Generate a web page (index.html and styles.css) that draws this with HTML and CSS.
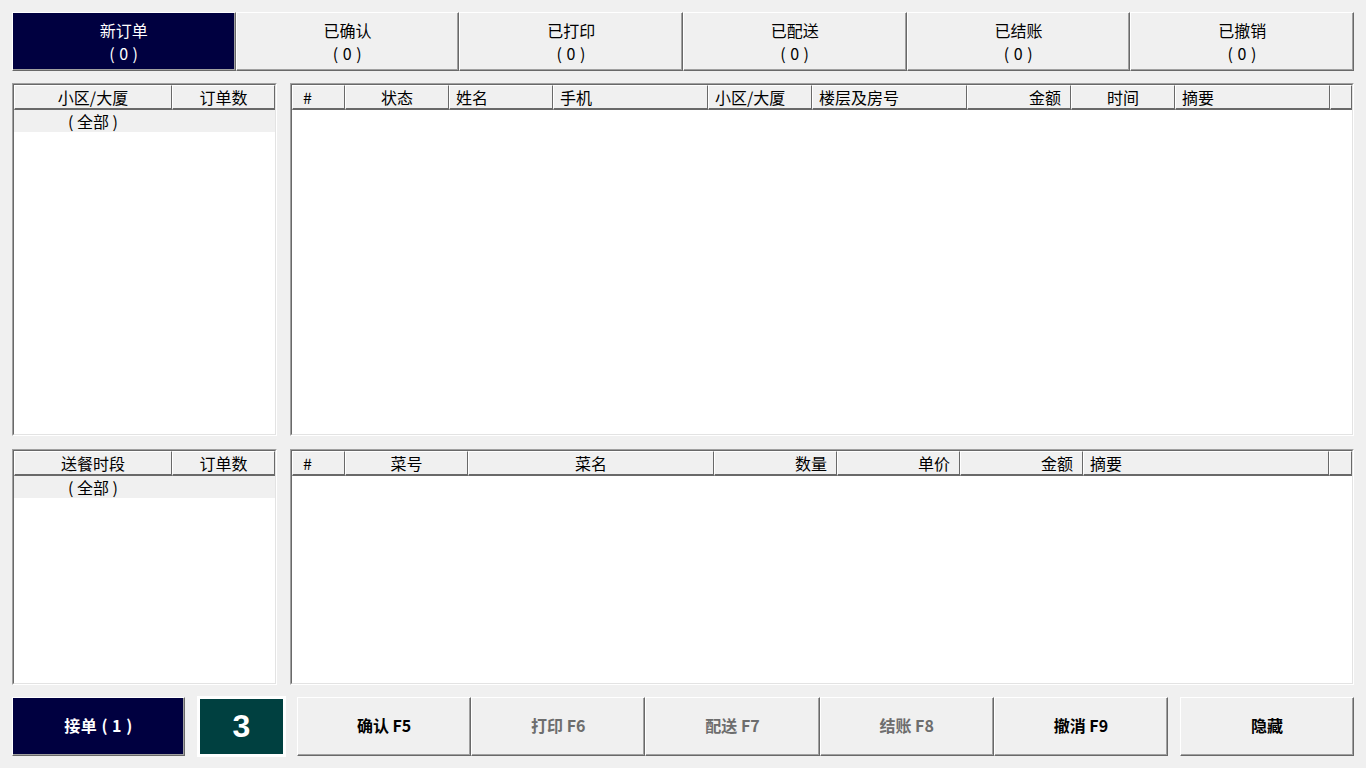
FILE: index.html
```html
<!DOCTYPE html>
<html lang="zh-CN">
<head>
<meta charset="utf-8">
<title>订单</title>
<link rel="stylesheet" href="styles.css">
</head>
<body>
<div class="app">
  <div class="tabs">
    <div class="tab active"><span class="t1">新订单</span><span class="t2">( 0 )</span></div>
    <div class="tab"><span class="t1">已确认</span><span class="t2">( 0 )</span></div>
    <div class="tab"><span class="t1">已打印</span><span class="t2">( 0 )</span></div>
    <div class="tab"><span class="t1">已配送</span><span class="t2">( 0 )</span></div>
    <div class="tab"><span class="t1">已结账</span><span class="t2">( 0 )</span></div>
    <div class="tab"><span class="t1">已撤销</span><span class="t2">( 0 )</span></div>
  </div>

  <div class="row row-top">
    <div class="panel side">
      <div class="inner">
        <div class="thead cols-side">
          <div class="h c">小区/大厦</div>
          <div class="h c">订单数</div>
        </div>
        <div class="trow cols-side">
          <div class="cell c">( 全部 )</div>
          <div class="cell"></div>
        </div>
      </div>
    </div>
    <div class="panel main">
      <div class="inner">
        <div class="thead cols-orders">
          <div class="h l hash">#</div>
          <div class="h c">状态</div>
          <div class="h l">姓名</div>
          <div class="h l">手机</div>
          <div class="h l">小区/大厦</div>
          <div class="h l">楼层及房号</div>
          <div class="h r">金额</div>
          <div class="h c">时间</div>
          <div class="h l">摘要</div>
          <div class="h"></div>
        </div>
      </div>
    </div>
  </div>

  <div class="row row-bottom">
    <div class="panel side">
      <div class="inner">
        <div class="thead cols-side">
          <div class="h c">送餐时段</div>
          <div class="h c">订单数</div>
        </div>
        <div class="trow cols-side">
          <div class="cell c">( 全部 )</div>
          <div class="cell"></div>
        </div>
      </div>
    </div>
    <div class="panel main">
      <div class="inner">
        <div class="thead cols-items">
          <div class="h l hash">#</div>
          <div class="h c">菜号</div>
          <div class="h c">菜名</div>
          <div class="h r">数量</div>
          <div class="h r">单价</div>
          <div class="h r">金额</div>
          <div class="h l">摘要</div>
          <div class="h"></div>
        </div>
      </div>
    </div>
  </div>

  <div class="actions">
    <div class="btn accept">接单 ( 1 )</div>
    <div class="count"><span>3</span></div>
    <div class="btn-group">
      <div class="btn">确认 F5</div>
      <div class="btn disabled">打印 F6</div>
      <div class="btn disabled">配送 F7</div>
      <div class="btn disabled">结账 F8</div>
      <div class="btn">撤消 F9</div>
    </div>
    <div class="btn hide">隐藏</div>
  </div>
</div>
</body>
</html>
```

FILE: styles.css
```css
* { box-sizing: border-box; }
html, body { margin: 0; padding: 0; }
body {
  background: #f0f0f0;
  font-family: "Noto Sans CJK SC", "Noto Sans", sans-serif;
  font-size: 16px;
  color: #000;
  width: 1366px;
  height: 768px;
  overflow: hidden;
}
.app {
  padding: 12px;
  display: flex;
  flex-direction: column;
  height: 768px;
}
.tabs {
  display: flex;
  height: 59px;
  flex: none;
}
.tab {
  flex: 1;
  display: flex;
  flex-direction: column;
  align-items: center;
  justify-content: center;
  border: 1px solid;
  border-color: #fff #696969 #696969 #fff;
  box-shadow: inset -1px -1px 0 #a0a0a0;
  line-height: 23px;
  background: #f0f0f0;
}
.tab .t1 { display: block; }
.tab .t2 { display: block; letter-spacing: 0.5px; }
.tab.active {
  background: #000040;
  color: #fff;
}
.row {
  display: flex;
  gap: 13px;
  flex: none;
}
.row-top { height: 353px; margin-top: 12px; }
.row-bottom { height: 236px; margin-top: 13px; }
.panel {
  border: 1px solid;
  border-color: #a0a0a0 #fff #fff #a0a0a0;
  background: #fff;
}
.panel.side { width: 265px; flex: none; }
.panel.main { flex: 1; }
.inner {
  height: 100%;
  border: 1px solid;
  border-color: #696969 #e3e3e3 #e3e3e3 #696969;
  background: #fff;
  overflow: hidden;
}
.thead { display: grid; height: 25px; }
.cols-side { grid-template-columns: 158px 1fr; }
.cols-orders { grid-template-columns: 53px 104px 104px 155px 104px 155px 104px 104px 155px 1fr; }
.cols-items { grid-template-columns: 53px 123px 246px 123px 123px 123px 246px 1fr; }
.h {
  background: #f0f0f0;
  border-top: 1px solid #fff;
  border-left: 1px solid #fff;
  border-right: 1px solid #696969;
  border-bottom: 2px solid #696969;
  line-height: 22px;
  padding: 0 6px;
  white-space: nowrap;
  overflow: hidden;
}
.h.l { text-align: left; }
.h.c { text-align: center; }
.h.r { text-align: right; padding-right: 9px; }
.h.hash { padding-left: 10px; }
.trow {
  display: grid;
  height: 22px;
  background: #f0f0f0;
}
.cell { line-height: 22px; white-space: nowrap; }
.cell.c { text-align: center; }
.actions {
  display: flex;
  gap: 12px;
  height: 59px;
  margin-top: 12px;
  flex: none;
  align-items: center;
}
.btn {
  height: 59px;
  display: flex;
  align-items: center;
  justify-content: center;
  padding-bottom: 3px;
  font-weight: bold;
  border: 1px solid;
  border-color: #fff #696969 #696969 #fff;
  box-shadow: inset -1px -1px 0 #a0a0a0;
  background: #f0f0f0;
  color: #000;
}
.btn.accept {
  width: 173px;
  flex: none;
  background: #000040;
  color: #fff;
  letter-spacing: 0.5px;
}
.btn.disabled { color: #6d6d6d; }
.btn.hide { width: 174px; flex: none; }
.count {
  width: 89px;
  height: 61px;
  flex: none;
  border: 3px solid #fff;
  background: #004040;
  display: flex;
  align-items: center;
  justify-content: center;
  color: #fff;
  font-family: "Liberation Sans", Arial, sans-serif;
  font-weight: bold;
  font-size: 32px;
  margin-right: -1px;
}
.btn-group {
  flex: 1;
  display: flex;
}
.btn-group .btn { flex: 1; }
```
